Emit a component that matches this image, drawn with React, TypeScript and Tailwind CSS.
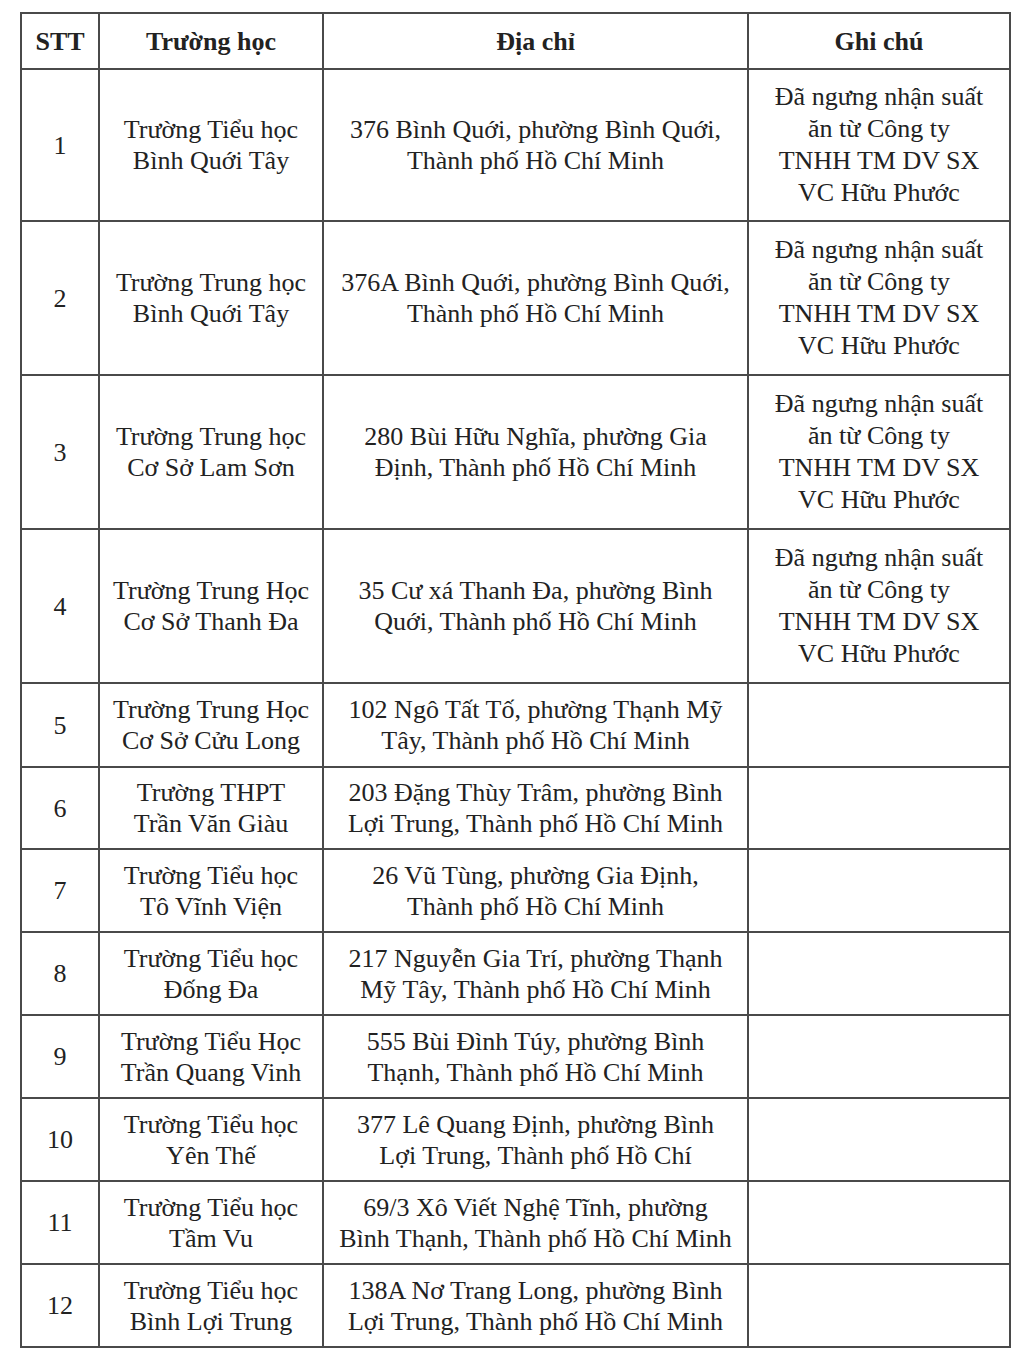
import React from "react";

const note = ["Đã ngưng nhận suất", "ăn từ Công ty", "TNHH TM DV SX", "VC Hữu Phước"];

type Row = { n: string; school: string[]; addr: string[]; note?: boolean; h: string };

const rows: Row[] = [
  { n: "1", school: ["Trường Tiểu học", "Bình Quới Tây"], addr: ["376 Bình Quới, phường Bình Quới,", "Thành phố Hồ Chí Minh"], note: true, h: "h-[152px]" },
  { n: "2", school: ["Trường Trung học", "Bình Quới Tây"], addr: ["376A Bình Quới, phường Bình Quới,", "Thành phố Hồ Chí Minh"], note: true, h: "h-[154px]" },
  { n: "3", school: ["Trường Trung học", "Cơ Sở Lam Sơn"], addr: ["280 Bùi Hữu Nghĩa, phường Gia", "Định, Thành phố Hồ Chí Minh"], note: true, h: "h-[154px]" },
  { n: "4", school: ["Trường Trung Học", "Cơ Sở Thanh Đa"], addr: ["35 Cư xá Thanh Đa, phường Bình", "Quới, Thành phố Hồ Chí Minh"], note: true, h: "h-[154px]" },
  { n: "5", school: ["Trường Trung Học", "Cơ Sở Cửu Long"], addr: ["102 Ngô Tất Tố, phường Thạnh Mỹ", "Tây, Thành phố Hồ Chí Minh"], h: "h-[84px]" },
  { n: "6", school: ["Trường THPT", "Trần Văn Giàu"], addr: ["203 Đặng Thùy Trâm, phường Bình", "Lợi Trung, Thành phố Hồ Chí Minh"], h: "h-[82px]" },
  { n: "7", school: ["Trường Tiểu học", "Tô Vĩnh Viện"], addr: ["26 Vũ Tùng, phường Gia Định,", "Thành phố Hồ Chí Minh"], h: "h-[83px]" },
  { n: "8", school: ["Trường Tiểu học", "Đống Đa"], addr: ["217 Nguyễn Gia Trí, phường Thạnh", "Mỹ Tây, Thành phố Hồ Chí Minh"], h: "h-[83px]" },
  { n: "9", school: ["Trường Tiểu Học", "Trần Quang Vinh"], addr: ["555 Bùi Đình Túy, phường Bình", "Thạnh, Thành phố Hồ Chí Minh"], h: "h-[83px]" },
  { n: "10", school: ["Trường Tiểu học", "Yên Thế"], addr: ["377 Lê Quang Định, phường Bình", "Lợi Trung, Thành phố Hồ Chí"], h: "h-[83px]" },
  { n: "11", school: ["Trường Tiểu học", "Tầm Vu"], addr: ["69/3 Xô Viết Nghệ Tĩnh, phường", "Bình Thạnh, Thành phố Hồ Chí Minh"], h: "h-[83px]" },
  { n: "12", school: ["Trường Tiểu học", "Bình Lợi Trung"], addr: ["138A Nơ Trang Long, phường Bình", "Lợi Trung, Thành phố Hồ Chí Minh"], h: "h-[83px]" },
];

function Lines({ lines }: { lines: string[] }) {
  return (
    <>
      {lines.map((l, i) => (
        <div key={i} className="whitespace-nowrap">{l}</div>
      ))}
    </>
  );
}

export default function App() {
  const cell = "border-2 border-[#4a4a4a] text-center align-middle p-0";
  return (
    <div className="w-[1020px] h-[1350px] bg-white pt-[12px] pl-[20px] text-[#222222] text-[26px] leading-[31px] font-['Liberation_Serif','Times_New_Roman',serif]">
      <table className="border-collapse table-fixed w-[989px] font-['Liberation_Serif','Times_New_Roman',serif]">
        <colgroup>
          <col className="w-[78px]" />
          <col className="w-[224px]" />
          <col className="w-[425px]" />
          <col className="w-[262px]" />
        </colgroup>
        <thead>
          <tr className="h-[56px] font-bold">
            <th className={cell}>STT</th>
            <th className={cell}>Trường học</th>
            <th className={cell}>Địa chỉ</th>
            <th className={cell}>Ghi chú</th>
          </tr>
        </thead>
        <tbody>
          {rows.map((r) => (
            <tr key={r.n} className={r.h}>
              <td className={cell}>{r.n}</td>
              <td className={cell}><Lines lines={r.school} /></td>
              <td className={cell}><Lines lines={r.addr} /></td>
              <td className={cell}>{r.note ? <div className="leading-[32px]"><Lines lines={note} /></div> : null}</td>
            </tr>
          ))}
        </tbody>
      </table>
    </div>
  );
}
